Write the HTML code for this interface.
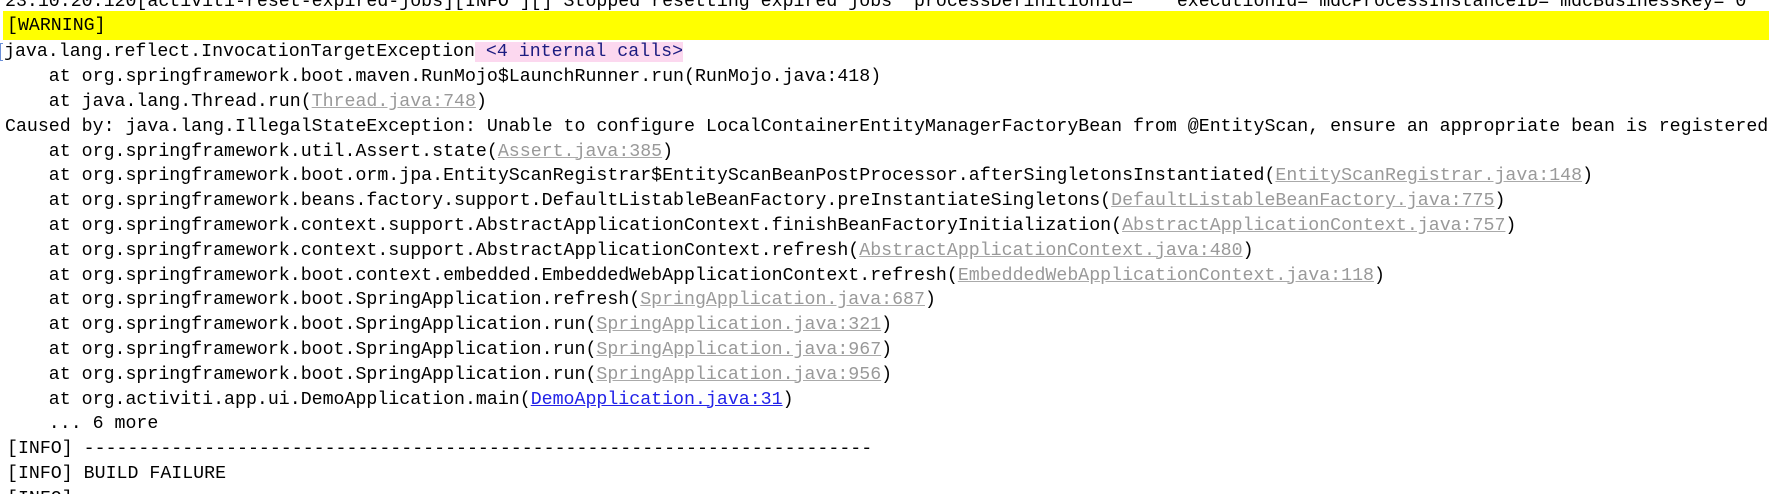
<!DOCTYPE html>
<html><head><meta charset="utf-8"><style>
html,body{margin:0;padding:0;background:#fff;width:1769px;height:494px;overflow:hidden;}
body{position:relative;font-family:"Liberation Mono","Courier New",monospace;font-size:18.25px;color:#000;}
.l{position:absolute;left:5px;height:24.8px;line-height:24.8px;white-space:pre;}
.g{color:#999;text-decoration:underline;text-decoration-color:#aaa;}
.b{color:#2222e8;text-decoration:underline;}
.pk{background:#fcd8ef;color:#1c1c80;}
.y{position:absolute;left:3px;right:0;top:11px;height:28.5px;background:#ffff00;}
.m{position:absolute;left:0;top:43px;width:2px;height:16px;border:1px solid #6a8fd8;border-right:none;}
</style></head><body>
<div class="y"></div>
<div class="m"></div>
<div class="l" style="top:-10px">23:10:20.120[activiti-reset-expired-jobs][INFO ][] Stopped resetting expired jobs  processDefinitionId=    executionId= mdcProcessInstanceID= mdcBusinessKey= 0</div>
<div class="l" style="top:14px;left:7px">[WARNING]</div>
<div class="l" style="top:40.4px;left:4px">java.lang.reflect.InvocationTargetException<span class="pk"> &lt;4 internal calls&gt;</span></div>
<div class="l" style="top:65.2px">    at org.springframework.boot.maven.RunMojo$LaunchRunner.run(RunMojo.java:418)</div>
<div class="l" style="top:90px">    at java.lang.Thread.run(<span class="g">Thread.java:748</span>)</div>
<div class="l" style="top:114.8px">Caused by: java.lang.IllegalStateException: Unable to configure LocalContainerEntityManagerFactoryBean from @EntityScan, ensure an appropriate bean is registered.</div>
<div class="l" style="top:139.6px">    at org.springframework.util.Assert.state(<span class="g">Assert.java:385</span>)</div>
<div class="l" style="top:164.4px">    at org.springframework.boot.orm.jpa.EntityScanRegistrar$EntityScanBeanPostProcessor.afterSingletonsInstantiated(<span class="g">EntityScanRegistrar.java:148</span>)</div>
<div class="l" style="top:189.2px">    at org.springframework.beans.factory.support.DefaultListableBeanFactory.preInstantiateSingletons(<span class="g">DefaultListableBeanFactory.java:775</span>)</div>
<div class="l" style="top:214px">    at org.springframework.context.support.AbstractApplicationContext.finishBeanFactoryInitialization(<span class="g">AbstractApplicationContext.java:757</span>)</div>
<div class="l" style="top:238.8px">    at org.springframework.context.support.AbstractApplicationContext.refresh(<span class="g">AbstractApplicationContext.java:480</span>)</div>
<div class="l" style="top:263.6px">    at org.springframework.boot.context.embedded.EmbeddedWebApplicationContext.refresh(<span class="g">EmbeddedWebApplicationContext.java:118</span>)</div>
<div class="l" style="top:288.4px">    at org.springframework.boot.SpringApplication.refresh(<span class="g">SpringApplication.java:687</span>)</div>
<div class="l" style="top:313.2px">    at org.springframework.boot.SpringApplication.run(<span class="g">SpringApplication.java:321</span>)</div>
<div class="l" style="top:338px">    at org.springframework.boot.SpringApplication.run(<span class="g">SpringApplication.java:967</span>)</div>
<div class="l" style="top:362.8px">    at org.springframework.boot.SpringApplication.run(<span class="g">SpringApplication.java:956</span>)</div>
<div class="l" style="top:387.6px">    at org.activiti.app.ui.DemoApplication.main(<span class="b">DemoApplication.java:31</span>)</div>
<div class="l" style="top:412.4px">    ... 6 more</div>
<div class="l" style="top:437.2px;left:7px">[INFO] ------------------------------------------------------------------------</div>
<div class="l" style="top:462px;left:7px">[INFO] BUILD FAILURE</div>
<div class="l" style="top:486.8px;left:7px">[INFO]</div>
</body></html>
